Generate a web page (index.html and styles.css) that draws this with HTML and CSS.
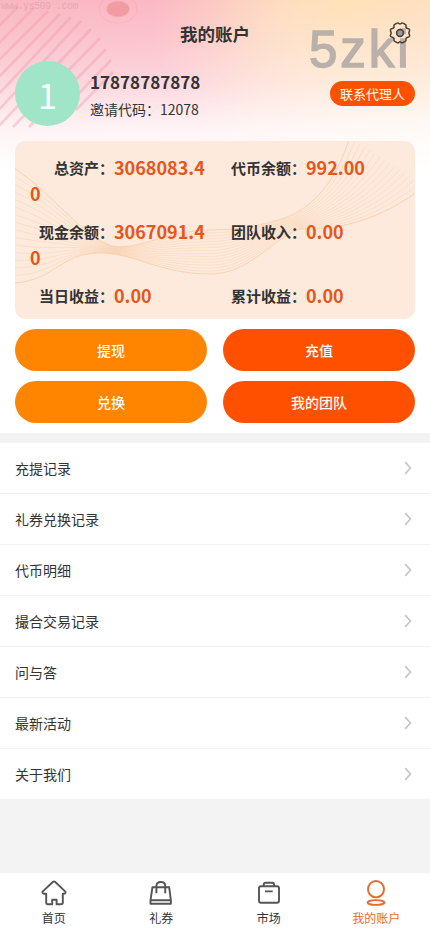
FILE: index.html
```html
<!DOCTYPE html>
<html lang="zh-CN">
<head>
<meta charset="utf-8">
<meta name="viewport" content="width=device-width, initial-scale=1">
<title>我的账户</title>
<link rel="stylesheet" href="styles.css">
</head>
<body>
<main class="page">
  <section class="account">
    <svg class="backdrop" viewBox="0 0 430 140" aria-hidden="true">
      <path d="M-5 30 18 7M-5 47 34 8M-5 64 48 11M-5 81 60 14M-5 98 71 17M-5 114 81 21M-5 130 91 29M13 127 100 38M29 127 106 49M62 111 111 60M76 110 113 72" fill="none" stroke="#ee9cab" stroke-opacity=".4" stroke-width="2.6"/>
      <ellipse cx="118" cy="9" rx="19" ry="14" fill="none" stroke="#f3a5ae" stroke-opacity=".45"/>
      <ellipse cx="118" cy="9" rx="11.5" ry="8" fill="#f29ba2" stroke="#f6b0b5"/>
    </svg>
    <span class="site-mark">www.ys509 .com</span>
    <span class="brand-mark">5zki</span>
    <header class="topbar">
      <h1>我的账户</h1>
      <svg class="gear" viewBox="0 0 24 24" aria-label="设置"><path d="M9 2.2Q10 1.5 11 2.5Q12 3.5 13 2.5Q14 1.5 15 2.2L17.6 3.6Q18.3 4.1 18 5.5Q17.8 7.1 19.7 7.4Q21.5 7.6 21.7 9L20.8 12L21.7 14.5Q21.5 16 19.7 16.2Q17.8 16.6 18 18.4Q18.2 19.7 17.5 20.2L15 21.7Q14 22.4 13 21.3Q12 20.2 11 21.3Q10 22.4 9 21.7L6.4 20.2Q5.7 19.7 6 18.4Q6.2 16.6 4.3 16.2Q2.5 16 2.3 14.5L3.2 12L2.3 9Q2.5 7.6 4.3 7.4Q6.2 7.1 6 5.5Q5.7 4.1 6.4 3.6Z"/><circle cx="12" cy="12" r="3.4"/></svg>
    </header>
    <div class="profile">
      <div class="avatar">1</div>
      <div class="who"><strong>17878787878</strong><span>邀请代码：12078</span></div>
      <a class="agent">联系代理人</a>
    </div>
    <div class="assets">
      <svg class="waves" id="waves" viewBox="0 0 400 178" aria-hidden="true"></svg>
      <div class="cell"><span class="label">总资产：</span><b>3068083.40</b></div>
      <div class="cell"><span class="label">代币余额：</span><b>992.00</b></div>
      <div class="cell"><span class="label">现金余额：</span><b>3067091.40</b></div>
      <div class="cell"><span class="label">团队收入：</span><b>0.00</b></div>
      <div class="cell"><span class="label">当日收益：</span><b>0.00</b></div>
      <div class="cell"><span class="label">累计收益：</span><b>0.00</b></div>
    </div>
    <div class="actions">
      <a class="btn">提现</a><a class="btn strong">充值</a>
      <a class="btn">兑换</a><a class="btn strong">我的团队</a>
    </div>
  </section>
  <ul class="menu">
    <li>充提记录<svg viewBox="0 0 8 14"><path d="M1.2 1.2 6.4 7 1.2 12.8"/></svg></li>
    <li>礼券兑换记录<svg viewBox="0 0 8 14"><path d="M1.2 1.2 6.4 7 1.2 12.8"/></svg></li>
    <li>代币明细<svg viewBox="0 0 8 14"><path d="M1.2 1.2 6.4 7 1.2 12.8"/></svg></li>
    <li>撮合交易记录<svg viewBox="0 0 8 14"><path d="M1.2 1.2 6.4 7 1.2 12.8"/></svg></li>
    <li>问与答<svg viewBox="0 0 8 14"><path d="M1.2 1.2 6.4 7 1.2 12.8"/></svg></li>
    <li>最新活动<svg viewBox="0 0 8 14"><path d="M1.2 1.2 6.4 7 1.2 12.8"/></svg></li>
    <li>关于我们<svg viewBox="0 0 8 14"><path d="M1.2 1.2 6.4 7 1.2 12.8"/></svg></li>
  </ul>
  <nav class="tabs">
    <a><svg viewBox="0 0 28 28"><path d="M13 2.8Q14 2 15 2.8L25.4 12.6Q26 14.5 24 14.8H22.8V23.5Q22.8 25.3 21 25.3H16.6V20.8H12.2V25.3H8Q6.2 25.3 6.2 23.5V14.8H4Q2 14.5 2.6 12.6Z"/></svg>首页</a>
    <a><svg viewBox="0 0 28 28"><path d="M5.4 8.3H22.2L23.9 21.3V24.7H3.5V21.3ZM3.5 21.3H23.9M9.4 14V7Q9.4 3 13.8 3Q18.2 3 18.2 7V14M9.4 12V14.3M18.2 12V14.3"/></svg>礼券</a>
    <a><svg viewBox="0 0 28 28"><path d="M6 7.3H22Q24 7.3 24 9.3V21.8Q24 23.8 22 23.8H6Q4 23.8 4 21.8V9.3Q4 7.3 6 7.3ZM8.7 7.3V5.8Q8.7 3.8 10.7 3.8H17.2Q19.2 3.8 19.2 5.8V7.3M10 12.4H17.7"/></svg>市场</a>
    <a class="active"><svg viewBox="0 0 28 28"><ellipse cx="14" cy="10.2" rx="8" ry="8.2"/><ellipse cx="14" cy="23.5" rx="8.4" ry="2.4"/></svg>我的账户</a>
  </nav>
</main>
<script src="waves.js"></script>
</body>
</html>
```
FILE: styles.css
```css
* { box-sizing: border-box; margin: 0; padding: 0; }
body { font-family: "Noto Sans CJK SC", sans-serif; color: #333; background: #f3f3f3; font-size: 14px; }
.page { display: flex; flex-direction: column; height: 932px; width: 430px; overflow: hidden; }
.account {
  position: relative; height: 433px; padding: 0 15px; overflow: hidden;
  background:
    linear-gradient(180deg, rgba(255,255,255,0) 0, rgba(255,255,255,.18) 40px, rgba(255,255,255,.42) 80px, rgba(255,255,255,.82) 125px, #fff 170px),
    radial-gradient(circle at 350px 0, #ffe2b8 0, rgba(255,224,190,.85) 70px, rgba(255,222,200,0) 200px),
    linear-gradient(90deg, #fab7c1 0, #fbb8c6 50%, #fddccd 100%);
}
.backdrop { position: absolute; left: 0; top: 0; width: 430px; height: 140px; }
.site-mark { position: absolute; left: 1px; top: 0; font: 10px/13px "Liberation Mono", monospace; color: #cf9ba5; opacity: .5; white-space: pre; letter-spacing: -.5px; }
.brand-mark { position: absolute; left: 309px; top: 21px; font: 400 51px/58px "Liberation Sans", sans-serif; color: #b9b1aa; letter-spacing: 3px; -webkit-text-stroke: 1.5px #b9b1aa; }
.topbar { position: relative; height: 61px; display: flex; justify-content: center; }
.topbar h1 { font-size: 17.5px; line-height: 26px; font-weight: 700; margin-top: 21px; }
.gear { position: absolute; right: 3px; top: 21px; width: 24px; height: 24px; fill: none; stroke: #493e34; stroke-width: 1.5; }
.gear circle { fill: #999; }
.profile { position: relative; display: flex; height: 65px; }
.avatar { width: 65px; height: 65px; border-radius: 50%; background: #a0e5c8; color: #fff; font-size: 34px; line-height: 67px; text-align: center; }
.who { display: flex; flex-direction: column; margin-left: 10px; flex: 1; }
.who strong { font-size: 17px; line-height: 26px; margin-top: 8px; }
.who span { line-height: 22px; margin-top: 3px; }
.agent { width: 85px; height: 25px; margin-top: 20px; border-radius: 13px; background: #ff5000; color: #fff; font-size: 13px; line-height: 25px; text-align: center; }
.assets { position: relative; display: grid; grid-template-columns: 182px 182px; column-gap: 10px; grid-auto-rows: 64px; height: 178px; margin-top: 15px; padding: 13px 15px; border-radius: 10px; background: #fdeadc; overflow: hidden; }
.waves { position: absolute; inset: 0; width: 400px; height: 178px; fill: none; stroke: #f5a35f; stroke-width: .8; }
.cell { position: relative; word-break: break-all; line-height: 26px; }
.cell .label { display: inline-block; width: 84px; font-size: 15px; line-height: 27px; height: 26px; vertical-align: top; font-weight: 700; text-align: right; }
.cell b { font-size: 18px; line-height: 26px; vertical-align: top; color: #e6551a; }
.actions { display: grid; grid-template-columns: 192px 192px; column-gap: 16px; row-gap: 10px; margin-top: 10px; }
.btn { height: 42px; border-radius: 21px; background: #ff8400; color: #fff; font-weight: 500; line-height: 42px; text-align: center; }
.btn.strong { background: #ff5000; }
.menu { list-style: none; margin-top: 10px; background: #fff; }
.menu li { height: 51px; padding: 0 18px 0 15px; border-bottom: 1px solid #f2f2f2; display: flex; align-items: center; justify-content: space-between; }
.menu li:last-child { height: 50px; border: 0; }
.menu svg { width: 8px; height: 14px; fill: none; stroke: #c8c8c8; stroke-width: 1.8; }
.tabs { display: grid; grid-template-columns: repeat(4, 1fr); height: 59px; margin-top: auto; background: #fff; font-size: 12px; }
.tabs a { display: flex; flex-direction: column; align-items: center; line-height: 18px; padding-top: 6px; }
.tabs svg { width: 28px; height: 28px; margin-bottom: 2px; fill: none; stroke: #555; stroke-width: 1.9; stroke-linejoin: round; }
.tabs .active { color: #e96a2c; }
.tabs .active svg { stroke: #e96a2c; }
```
FILE: waves.js
```js
// Strands blend between an upper and a lower cubic path.
const upper = [0, 28, 35, 50, 60, 88, 92, 103, 115, 114, 150, 89, 195, 89, 215, 89, 245, 86, 272, 76, 305, 62, 322, 35, 335, -4];
const lower = [0, 142, 40, 139, 45, 112, 85, 112, 120, 112, 145, 133, 195, 133, 235, 133, 255, 99, 285, 88, 320, 90, 365, 80, 410, 45];
const ns = 'http://www.w3.org/2000/svg';
const total = 15;
for (let k = 0; k <= total; k++) {
  const t = k / total;
  const p = upper.map((v, i) => (v + (lower[i] - v) * t).toFixed(1));
  const path = document.createElementNS(ns, 'path');
  path.setAttribute('d', `M${p[0]} ${p[1]}C${p.slice(2).join(' ')}`);
  path.setAttribute('stroke-opacity', k === 0 || k === total ? 0.4 : 0.2);
  document.getElementById('waves').appendChild(path);
}
```
